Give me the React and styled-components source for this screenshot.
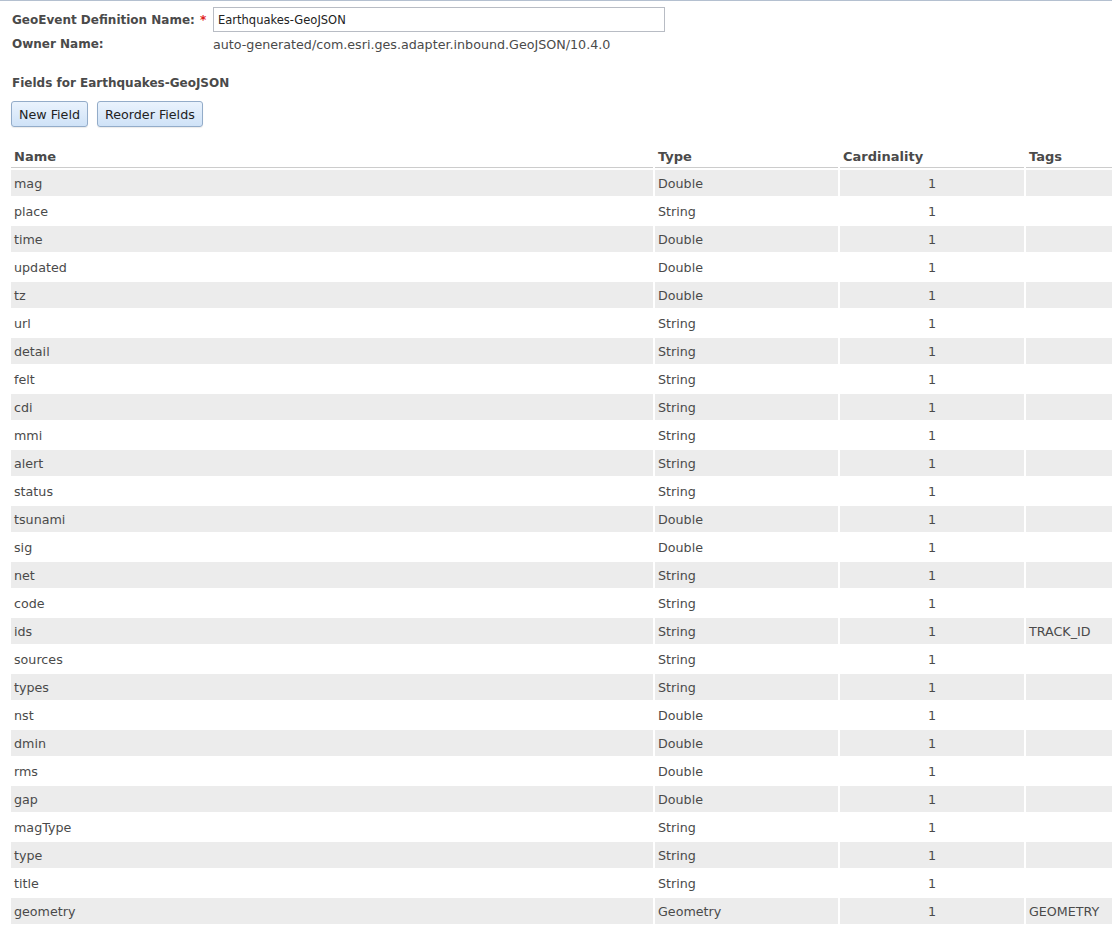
import React from 'react'
import styled, { createGlobalStyle } from 'styled-components'

const GlobalStyle = createGlobalStyle`
    html, body {
        margin: 0;
        padding: 0;
        background: #fff;
        overflow: hidden;
    }
    body {
        font-family: "DejaVu Sans", Verdana, sans-serif;
        font-size: 13px;
        color: #4a4a4a;
    }
`

const Page = styled.div`
    border-top: 1px solid #b4c0d0;
    padding: 6px 0 0 11px;
    width: 1101px;
`
const FormRow = styled.div`
    display: flex;
    align-items: center;
    height: ${props => props.h || 25}px;
`
const Label = styled.div`
    width: 201px;
    padding-left: 1px;
    font-size: 12px;
    font-weight: bold;
    white-space: nowrap;
    color: #4a4a4a;
`
const Required = styled.span`
    color: #e02020;
    margin-left: 5px;
`
const NameInput = styled.input`
    box-sizing: border-box;
    width: 452px;
    height: 25px;
    border: 1px solid #b8bcc4;
    padding: 0 4px;
    font-family: "DejaVu Sans", Verdana, sans-serif;
    font-size: 11.5px;
    color: #222;
    outline: none;
`
const Value = styled.div`
    color: #4a4a4a;
    font-size: 12.7px;
`
const SectionTitle = styled.div`
    font-weight: bold;
    font-size: 12px;
    margin-top: 18px;
    padding-left: 1px;
    height: 18px;
    line-height: 18px;
`
const Toolbar = styled.div`
    display: flex;
    gap: 9px;
    margin-top: 9px;
`
const Button = styled.button`
    height: 26px;
    padding: 0 7px;
    border: 1px solid #93acc9;
    border-radius: 3px;
    background: linear-gradient(#eaf3fd, #cfe2f7);
    font-family: "DejaVu Sans", Verdana, sans-serif;
    font-size: 12.7px;
    color: #222;
    box-shadow: 0 1px 1px rgba(0, 0, 0, 0.08);
`
const Table = styled.table`
    border-collapse: separate;
    border-spacing: 2px;
    margin: 17px 0 0 -2px;
    table-layout: fixed;
    width: 1108px;
`
const HeadCell = styled.th`
    text-align: left;
    font-weight: bold;
    color: #4a4a4a;
    height: 18px;
    padding: 0 3px 3px;
    border-bottom: 1px solid #cccccc;
    vertical-align: bottom;
`
const Row = styled.tr`
    background: ${props => (props.odd ? '#ececec' : '#fff')};
`
const Cell = styled.td`
    height: 26px;
    padding: 0 3px;
    font-size: 12.7px;
    color: #4a4a4a;
    text-align: ${props => props.align || 'left'};
    white-space: nowrap;
`

const fields = [
    ['mag', 'Double', ''],
    ['place', 'String', ''],
    ['time', 'Double', ''],
    ['updated', 'Double', ''],
    ['tz', 'Double', ''],
    ['url', 'String', ''],
    ['detail', 'String', ''],
    ['felt', 'String', ''],
    ['cdi', 'String', ''],
    ['mmi', 'String', ''],
    ['alert', 'String', ''],
    ['status', 'String', ''],
    ['tsunami', 'Double', ''],
    ['sig', 'Double', ''],
    ['net', 'String', ''],
    ['code', 'String', ''],
    ['ids', 'String', 'TRACK_ID'],
    ['sources', 'String', ''],
    ['types', 'String', ''],
    ['nst', 'Double', ''],
    ['dmin', 'Double', ''],
    ['rms', 'Double', ''],
    ['gap', 'Double', ''],
    ['magType', 'String', ''],
    ['type', 'String', ''],
    ['title', 'String', ''],
    ['geometry', 'Geometry', 'GEOMETRY'],
]

function App() {
    return (
        <Page>
            <GlobalStyle />
            <FormRow>
                <Label>GeoEvent Definition Name:<Required>*</Required></Label>
                <NameInput defaultValue="Earthquakes-GeoJSON" />
            </FormRow>
            <FormRow h={24}>
                <Label>Owner Name:</Label>
                <Value>auto-generated/com.esri.ges.adapter.inbound.GeoJSON/10.4.0</Value>
            </FormRow>
            <SectionTitle>Fields for Earthquakes-GeoJSON</SectionTitle>
            <Toolbar>
                <Button>New Field</Button>
                <Button>Reorder Fields</Button>
            </Toolbar>
            <Table>
                <colgroup>
                    <col style={{ width: 642 }} />
                    <col style={{ width: 183 }} />
                    <col style={{ width: 184 }} />
                    <col />
                </colgroup>
                <thead>
                    <tr>
                        <HeadCell>Name</HeadCell>
                        <HeadCell>Type</HeadCell>
                        <HeadCell>Cardinality</HeadCell>
                        <HeadCell>Tags</HeadCell>
                    </tr>
                </thead>
                <tbody>
                    {fields.map((f, i) => (
                        <Row key={i} odd={i % 2 === 0}>
                            <Cell>{f[0]}</Cell>
                            <Cell>{f[1]}</Cell>
                            <Cell align="center">1</Cell>
                            <Cell>{f[2]}</Cell>
                        </Row>
                    ))}
                </tbody>
            </Table>
        </Page>
    )
}

export default App
